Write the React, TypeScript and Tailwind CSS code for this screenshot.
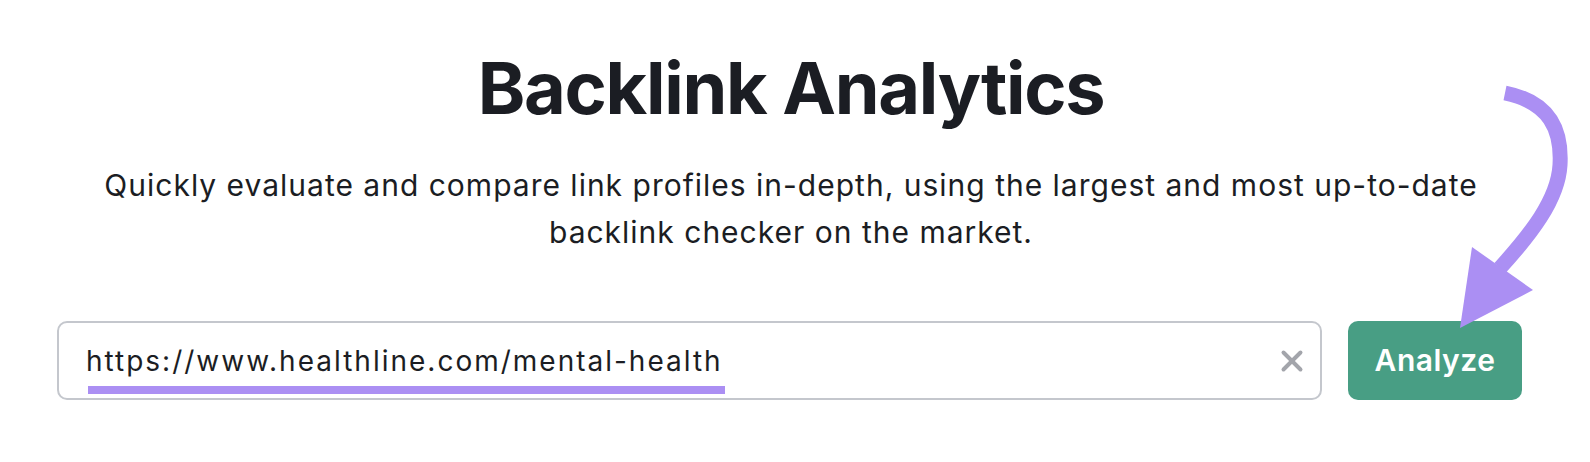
import { X } from 'lucide-react';

export default function App() {
  return (
    <div className="relative h-[462px] w-[1590px] overflow-hidden bg-white font-['Inter',sans-serif] text-[#1b1d23]">
      <div className="flex flex-col items-center pr-[8px] pt-[48px]">
        <h1 className="text-[72px] font-bold leading-[80px] tracking-[-1.3px]">Backlink Analytics</h1>
        <p className="mt-[34px] text-center text-[30px] leading-[47px] tracking-[1px]">
          Quickly evaluate and compare link profiles in-depth, using the largest and most up-to-date
          <br />
          backlink checker on the market.
        </p>
      </div>

      <div className="mt-[65px] flex items-center gap-[26px] pl-[57px]">
        <div className="flex h-[79px] w-[1265px] items-center rounded-[10px] border-2 border-[#c4c7cd] pl-[27px] pr-[11px]">
          <span className="relative text-[28px] leading-none tracking-[2px]">
            https://www.healthline.com/mental-health
            <span className="absolute left-[2px] -right-[2px] top-[39px] h-[8px] bg-[#ab8ff3]" />
          </span>
          <X className="ml-auto h-[34px] w-[34px] text-[#a3a5ab]" strokeWidth={2.8} />
        </div>
        <button className="flex h-[79px] w-[174px] items-center justify-center rounded-[10px] bg-[#489e84] text-[30px] font-semibold tracking-[0.5px] text-white">
          Analyze
        </button>
      </div>

      <svg
        className="pointer-events-none absolute left-0 top-0"
        width="1590"
        height="462"
        viewBox="0 0 1590 462"
      >
        <path
          d="M1505 93 C1550 102, 1562 130, 1560 165 C1558 200, 1530 235, 1500 268"
          fill="none"
          stroke="#ab8ff3"
          strokeWidth="15"
        />
        <polygon points="1472,247 1533,290 1460,328" fill="#ab8ff3" />
      </svg>
    </div>
  );
}
